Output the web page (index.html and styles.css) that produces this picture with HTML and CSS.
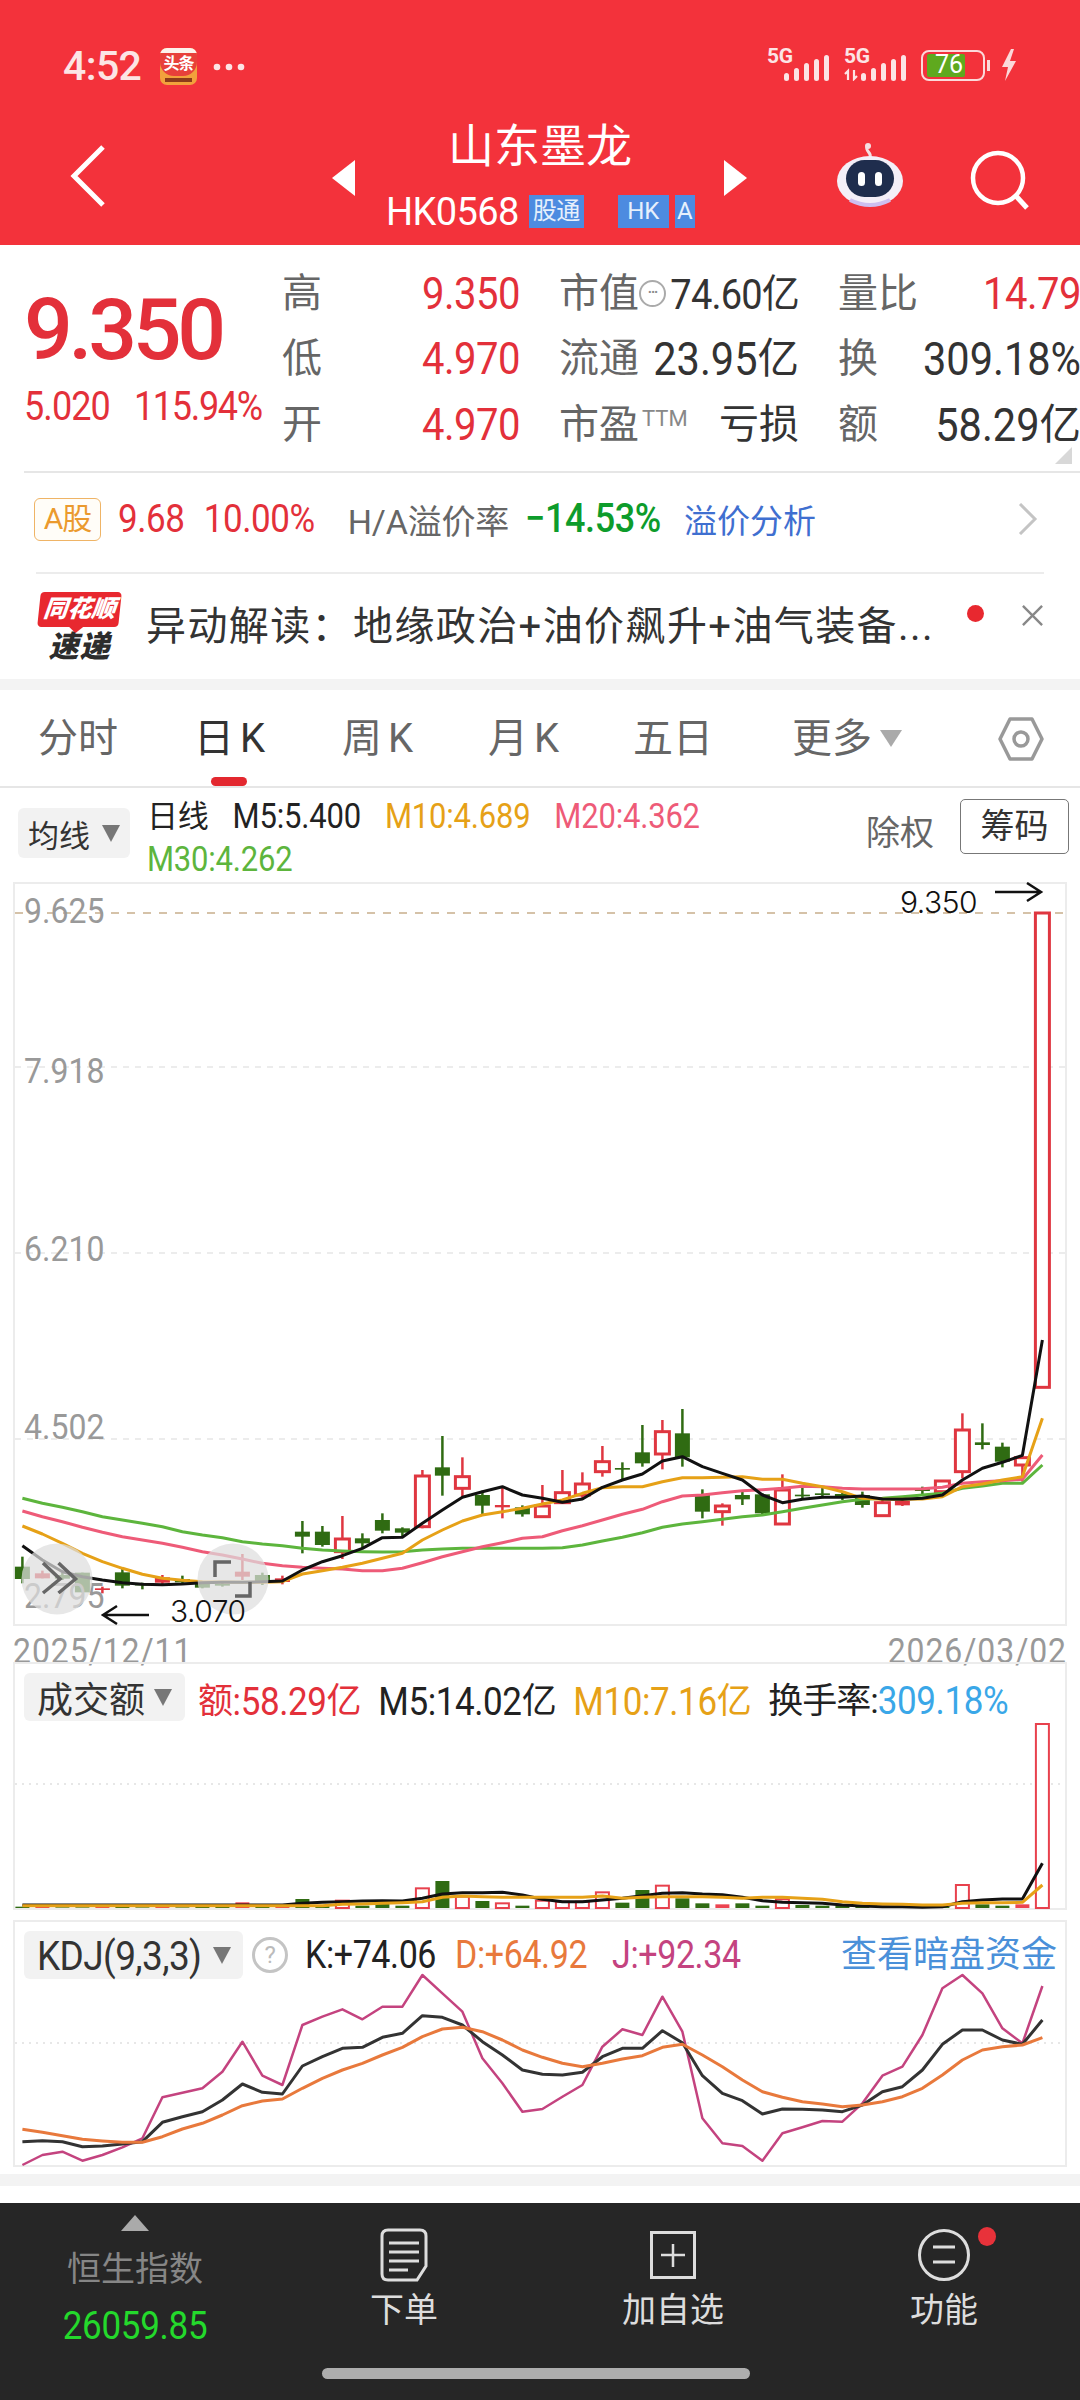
FILE: index.html
```html
<!DOCTYPE html>
<html lang="zh-CN">
<head>
<meta charset="utf-8">
<title>山东墨龙</title>
<link rel="stylesheet" href="styles.css">
</head>
<body>
<div class="page">
  <header class="top">
    <div class="status">
      <span class="time">4:52</span>
      <span class="app-icon"><span class="app-top"></span><span class="app-text">头条</span><span class="app-sub"></span></span>
      <svg class="more-dots" viewBox="0 0 32 8"><circle cx="4" cy="4" r="3.300"/><circle cx="16" cy="4" r="3.300"/><circle cx="28" cy="4" r="3.300"/></svg>
      <span class="status-right">
        <span class="sim"><span class="five-g">5G</span><svg class="bars" viewBox="0 0 45 26"><rect x="0" y="18" width="5" height="8" rx="2.500"/><rect x="10" y="13" width="5" height="13" rx="2.500"/><rect x="20" y="8" width="5" height="18" rx="2.500"/><rect x="30" y="4" width="5" height="22" rx="2.500"/><rect x="40" y="0" width="5" height="26" rx="2.500"/></svg></span>
        <span class="sim sim-two"><span class="five-g">5G</span><svg class="bars" viewBox="0 0 62 26"><path d="M4 25v-9l-3 3M10 15v9l3-3" fill="none" stroke="#fce4e5" stroke-width="2.200"/><rect x="17" y="18" width="5" height="8" rx="2.500"/><rect x="27" y="13" width="5" height="13" rx="2.500"/><rect x="37" y="8" width="5" height="18" rx="2.500"/><rect x="47" y="4" width="5" height="22" rx="2.500"/><rect x="57" y="0" width="5" height="26" rx="2.500"/></svg></span>
        <span class="battery"><span class="battery-fill"></span><span class="battery-num">76</span></span>
        <span class="battery-cap"></span>
        <svg class="bolt" viewBox="0 0 16 32"><path d="M10 0 1 18h6l-3 14 11-20H9l4-12z" fill="#fbd9da"/></svg>
      </span>
    </div>
    <nav class="nav">
      <svg class="back" viewBox="0 0 36 62"><path d="M33 2 4 31l29 29" fill="none" stroke="#fff" stroke-width="5"/></svg>
      <div class="switcher">
        <span class="tri tri-left"></span>
        <div class="stock">
          <div class="stock-name">山东墨龙</div>
          <div class="stock-code">
            <span class="code">HK0568</span>
            <span class="badge badge-tong"><span class="badge-clip">股通</span></span>
            <span class="badge badge-hk">HK</span>
            <span class="badge badge-a">A</span>
          </div>
        </div>
        <span class="tri tri-right"></span>
      </div>
      <svg class="robot" viewBox="0 0 70 66">
        <path d="M34 14c2-4-5-6-3-10" fill="none" stroke="#f4dfe2" stroke-width="3"/>
        <circle cx="32" cy="3" r="3" fill="#f4dfe2"/>
        <ellipse cx="34" cy="38" rx="33" ry="25" fill="#f4eff8"/>
        <path d="M14 57q20 10 40 0" fill="none" stroke="#cdbff0" stroke-width="4"/>
        <rect x="10" y="17" width="48" height="37" rx="18.500" fill="#1f2d4d"/>
        <rect x="22" y="29" width="7" height="14" rx="3.500" fill="#fff"/>
        <rect x="39" y="29" width="7" height="14" rx="3.500" fill="#fff"/>
      </svg>
      <svg class="search" viewBox="0 0 62 60"><circle cx="28" cy="28" r="25" fill="none" stroke="#fff" stroke-width="4.500"/><path d="M46 46l11 12" stroke="#fff" stroke-width="5"/></svg>
    </nav>
  </header>

  <section class="quote">
    <div class="price">
      <div class="price-now">9.350</div>
      <div class="price-change"><span class="tall">5.020</span><span class="tall pct">115.94%</span></div>
    </div>
    <div class="stats">
      <div class="stat"><span class="label">高</span><span class="up tall">9.350</span></div>
      <div class="stat"><span class="label">市值<span class="more-dot">···</span></span><span class="dark small-val tall">74.60<i class="yi">亿</i></span></div>
      <div class="stat"><span class="label">量比</span><span class="up tall">14.79</span></div>
      <div class="stat"><span class="label">低</span><span class="up tall">4.970</span></div>
      <div class="stat"><span class="label">流通</span><span class="dark wide tall">23.95<i class="yi">亿</i></span></div>
      <div class="stat"><span class="label">换</span><span class="dark wide tall">309.18%</span></div>
      <div class="stat"><span class="label">开</span><span class="up tall">4.970</span></div>
      <div class="stat"><span class="label">市盈<sup class="ttm">TTM</sup></span><span class="dark">亏损</span></div>
      <div class="stat"><span class="label">额</span><span class="dark wide tall">58.29<i class="yi">亿</i></span></div>
    </div>
    <span class="corner"></span>
  </section>

  <section class="arow">
    <span class="a-badge">A股</span>
    <span class="a-val a-price tall">9.68</span>
    <span class="a-val a-pct tall">10.00%</span>
    <span class="a-label">H/A溢价率</span>
    <span class="a-green tall">−14.53%</span>
    <span class="a-link">溢价分析</span>
    <svg class="a-chevron" viewBox="0 0 20 32"><path d="M2 1l15 15L2 31" fill="none" stroke="#c4c4c4" stroke-width="3"/></svg>
  </section>

  <section class="news">
    <div class="news-logo"><span class="logo-top"><span class="logo-name">同花顺</span></span><span class="logo-bottom">速递</span></div>
    <div class="news-text">异动解读：地缘政治+油价飙升+油气装备...</div>
    <span class="news-dot"></span>
    <svg class="news-close" viewBox="0 0 24 24"><path d="M2 2l20 20M22 2 2 22" stroke="#888" stroke-width="2.500"/></svg>
  </section>

  <div class="band"></div>

  <nav class="tabs">
    <span class="tab">分时</span>
    <span class="tab tab-on">日<b class="k">K</b></span>
    <span class="tab">周<b class="k">K</b></span>
    <span class="tab">月<b class="k">K</b></span>
    <span class="tab">五日</span>
    <span class="tab tab-more">更多<span class="down down-light"></span></span>
    <svg class="hex" viewBox="0 0 46 44"><path d="M12 2h22l10 20-10 20H12L2 22z" fill="none" stroke="#999" stroke-width="3.500" stroke-linejoin="round"/><circle cx="23" cy="22" r="7" fill="none" stroke="#999" stroke-width="3.500"/></svg>
  </nav>

  <section class="legend">
    <span class="chip chip-ma">均线<span class="down"></span></span>
    <div class="legend-values">
      <span class="ink">日线</span><span class="ink tall">M5:5.400</span><span class="c-orange tall">M10:4.689</span><span class="c-pink tall">M20:4.362</span>
      <span class="c-green tall">M30:4.262</span>
    </div>
    <span class="adjust">除权</span>
    <span class="chips-btn">筹码</span>
  </section>

  <section class="panel panel-k">
    <svg id="kline" class="plot" viewBox="13 882 1054 744"></svg>
    <span class="axis axis-1 tall">9.625</span>
    <span class="axis axis-2 tall">7.918</span>
    <span class="axis axis-3 tall">6.210</span>
    <span class="axis axis-4 tall">4.502</span>
    <span class="axis axis-5 tall">2.795</span>
    <svg class="plot" viewBox="13 882 1054 744">
      <circle cx="57" cy="1579" r="35.500" class="fab"/>
      <circle cx="233" cy="1579" r="35.500" class="fab"/>
      <path d="M43 1563l17 16-17 14M58.500 1563l17 16-17 14" class="fab-ico"/>
      <path d="M215 1577v-15h16M235 1596h15v-14" class="fab-ico"/>
      <path d="M149 1615h-46M117 1606l-14 9 14 9" class="mark"/>
      <path d="M995 892h46M1027 883l14 9-14 9" class="mark"/>
    </svg>
    <span class="mark-text mark-high">9.350</span>
    <span class="mark-text mark-low">3.070</span>
  </section>

  <div class="dates"><span class="tall">2025/12/11</span><span class="tall">2026/03/02</span></div>

  <section class="panel panel-vol">
    <svg id="vol" class="plot" viewBox="13 1662 1054 248"></svg>
    <div class="ind-head">
      <span class="chip chip-vol">成交额<span class="down"></span></span>
      <span class="c-red tall"><i class="yi">额</i>:58.29<i class="yi">亿</i></span>
      <span class="ink tall">M5:14.02<i class="yi">亿</i></span>
      <span class="c-orange tall">M10:7.16<i class="yi">亿</i></span>
      <span class="turn"><span class="ink">换手率:</span><span class="c-blue tall">309.18%</span></span>
    </div>
  </section>

  <section class="panel panel-kdj">
    <svg id="kdj" class="plot" viewBox="13 1920 1054 247"></svg>
    <div class="ind-head">
      <span class="chip chip-kdj"><span class="tall">KDJ(9,3,3)</span><span class="down"></span></span>
      <span class="help">?</span>
      <span class="ink kv kv-k tall">K:+74.06</span>
      <span class="c-dline kv tall">D:+64.92</span>
      <span class="c-jline kv kv-j tall">J:+92.34</span>
      <span class="dark-pool">查看暗盘资金</span>
    </div>
  </section>

  <div class="spacer-white"></div>
  <div class="band band-low"></div>
  <div class="spacer-bottom"></div>

  <footer class="bottom">
    <div class="index">
      <span class="index-arrow"></span>
      <span class="index-name">恒生指数</span>
      <span class="index-val tall">26059.85</span>
    </div>
    <div class="action">
      <svg class="action-ico ico-order" viewBox="0 0 48 54"><path d="M8 2h32q6 0 6 6v30l-9 14H8q-6 0-6-6V8q0-6 6-6z" fill="none" stroke="#ddd" stroke-width="3"/><path d="M9 15h30M9 24h30M9 33h30M9 42h19" stroke="#ddd" stroke-width="3"/></svg>
      <span>下单</span>
    </div>
    <div class="action">
      <svg class="action-ico ico-add" viewBox="0 0 46 48"><rect x="1.500" y="1.500" width="43" height="45" fill="none" stroke="#ddd" stroke-width="3"/><path d="M23 13v23M11 24h24" stroke="#ddd" stroke-width="2.500"/></svg>
      <span>加自选</span>
    </div>
    <div class="action">
      <svg class="action-ico ico-fn" viewBox="0 0 52 52"><circle cx="26" cy="26" r="24.500" fill="none" stroke="#ddd" stroke-width="3"/><path d="M15 18h22M15 33h22" stroke="#ddd" stroke-width="3"/></svg>
      <span>功能</span>
      <i class="fn-dot"></i>
    </div>
    <span class="home-pill"></span>
  </footer>
</div>
<script src="chart.js"></script>
</body>
</html>
```

FILE: styles.css
```css
* { box-sizing: border-box; }
html, body { margin: 0; padding: 0; background: #fff; }
body { font-family: Roboto, "Noto Sans CJK SC", sans-serif; }
.page { width: 1080px; height: 2400px; overflow: hidden; display: flex; flex-direction: column; position: relative; }
.tall { display: inline-block; transform: scaleY(1.12); }
.yi { display: inline-block; font-style: normal; transform: scaleY(.9); }

/* header */
.top { height: 245px; background: #f3323b; color: #fff; flex: none; }
.status { height: 125px; padding: 48px 63px 0 63px; display: flex; align-items: flex-start; }
.time { width: 97px; font-size: 41px; line-height: 36px; font-weight: 500; color: #fce4e5; letter-spacing: -.6px; }
.app-icon { width: 37px; height: 37px; border-radius: 7px; background: #f2a13c; position: relative; overflow: hidden; display: block; }
.app-top { position: absolute; left: 0; right: 0; top: 0; height: 28px; background: #e8403a; border-top: 5px solid #fdf3ec; border-radius: 0 0 14px 14px; }
.app-text { position: absolute; left: 0; top: 7px; font-size: 16px; line-height: 18px; color: #fff; width: 37px; text-align: center; font-weight: 700; letter-spacing: -1px; }
.app-sub { position: absolute; left: 5px; right: 5px; bottom: 3px; height: 4px; background: #8d3a1a; }
.more-dots { width: 32px; height: 8px; margin: 15px 0 0 16px; fill: #fce4e5; }
.status-right { margin-left: auto; display: flex; align-items: flex-start; }
.sim { position: relative; display: block; width: 62px; height: 33px; }
.sim-two { margin-left: 15px; }
.five-g { position: absolute; left: 0; top: -2px; font-size: 21px; line-height: 20px; font-weight: 700; color: #fce4e5; letter-spacing: -.4px; }
.bars { position: absolute; right: 0; bottom: 0; width: 45px; height: 26px; fill: #fce4e5; }
.sim-two .bars { width: 62px; }
.battery { margin-left: 15px; margin-top: 2px; width: 64px; height: 31px; border: 2.500px solid #fbd9da; border-radius: 8px; position: relative; display: block; }
.battery-fill { position: absolute; left: 4px; top: 2px; bottom: 2px; width: 38px; background: #5fa91e; border-radius: 2px; }
.battery-num { position: absolute; left: 12px; top: 0; font-size: 25px; line-height: 26px; color: #fff; }
.battery-cap { width: 3px; height: 11px; background: #fbd9da; margin: 12px 0 0 2px; display: block; }
.bolt { width: 16px; height: 32px; margin: 1px 0 0 11px; }

.nav { height: 120px; display: flex; align-items: flex-start; position: relative; }
.back { width: 36px; height: 62px; margin: 20px 0 0 70px; }
.switcher { position: absolute; left: 332px; top: 0; width: 415px; display: flex; justify-content: space-between; }
.tri { width: 0; height: 0; border-style: solid; border-width: 18px 0; margin-top: 35px; border-color: transparent; }
.tri-left { border-right: 23px solid #fff; }
.tri-right { border-left: 23px solid #fff; }
.stock { position: absolute; left: 54px; top: -4px; width: 310px; }
.stock-name { font-size: 46px; line-height: 50px; text-align: center; width: 308px; }
.stock-code { display: flex; align-items: center; margin-top: 24px; height: 33px; }
.code { font-size: 38px; line-height: 34px; color: #fff; letter-spacing: -.6px; }
.badge { background: #4d8be0; font-size: 24px; line-height: 32px; height: 33px; padding: 0; text-align: center; display: block; color: #e7f0fc; overflow: hidden; }
.badge-tong { width: 55px; margin-left: 10px; white-space: nowrap; }
.badge-clip { letter-spacing: -.5px; }
.badge-hk { width: 51px; margin-left: 34px; }
.badge-a { width: 20px; margin-left: 6px; }
.robot { position: absolute; left: 836px; top: 18px; width: 70px; height: 66px; }
.search { position: absolute; left: 970px; top: 25px; width: 62px; height: 60px; }

/* quote */
.quote { height: 228px; margin-left: 24px; border-bottom: 2px solid #e6e6e6; position: relative; flex: none; display: flex; }
.price { width: 259px; color: #e3303a; flex: none; }
.price-now { font-size: 86px; line-height: 64px; margin: 53px 0 0 0; font-weight: 500; letter-spacing: -4.300px; }
.price-change { font-size: 36px; line-height: 30px; margin-top: 30px; display: flex; gap: 24px; letter-spacing: -.9px; white-space: nowrap; }
.pct { letter-spacing: -1.300px; }
.stats { position: absolute; left: 258px; top: 0; display: grid; grid-template-columns: 238px 240px 243px; column-gap: 39px; grid-auto-rows: 65.500px; padding-top: 16px; white-space: nowrap; }
.stat { display: flex; justify-content: space-between; align-items: center; font-size: 40px; line-height: 44px; }
.label { color: #666; display: flex; align-items: center; }
.up { color: #e3303a; letter-spacing: -.5px; }
.dark { color: #333; letter-spacing: 0; }
.wide { font-size: 41.500px; }
.small-val { font-size: 38px; letter-spacing: -.8px; }
.more-dot { width: 27px; height: 27px; border: 2px solid #aaa; border-radius: 50%; font-size: 14px; line-height: 20px; color: #888; text-align: center; margin-left: 0; letter-spacing: -1px; font-weight: 700; }
.ttm { font-size: 22px; line-height: 22px; color: #888; margin: -12px 0 0 3px; }
.corner { position: absolute; right: 8px; bottom: 7px; width: 0; height: 0; border-style: solid; border-width: 0 0 17px 17px; border-color: transparent transparent #d8d8d8 transparent; }

/* A share */
.arow { height: 99px; display: flex; align-items: center; padding: 0 0 7px 34px; flex: none; white-space: nowrap; position: relative; font-size: 35px; }
.a-badge { width: 67px; height: 43px; border: 1.500px solid #efb466; border-radius: 6px; color: #eb9a2e; font-size: 30px; line-height: 40px; text-align: center; background: #fffdf8; letter-spacing: -1px; }
.a-val { color: #e3303a; letter-spacing: -.4px; }
.a-price { margin-left: 17px; }
.a-pct { margin-left: 19px; }
.a-label { color: #666; margin-left: 33px; font-size: 34px; letter-spacing: -.2px; }
.a-green { color: #0d9c2b; margin-left: 16px; font-size: 36px; font-weight: 500; letter-spacing: -.4px; }
.a-link { color: #3f6fd0; margin-left: 23px; font-size: 33px; }
.a-chevron { position: absolute; left: 1018px; top: 30px; width: 20px; height: 32px; }

/* news */
.news { height: 107px; margin: 0 36px; border-top: 2px solid #ececec; display: flex; align-items: flex-start; flex: none; position: relative; }
.news-logo { width: 81px; margin: 18px 0 0 3px; }
.logo-top { display: block; height: 35px; background: #e8282f; border-radius: 4px; transform: skewX(-6deg); position: relative; text-align: center; }
.logo-top::after { content: ""; position: absolute; left: 32px; bottom: -6px; width: 0; height: 0; border-style: solid; border-width: 6px 7px 0; border-color: #e8282f transparent transparent; }
.logo-name { color: #fff; font-size: 24px; line-height: 34px; font-weight: 900; font-style: italic; letter-spacing: 0; }
.logo-bottom { display: block; font-size: 30px; line-height: 30px; color: #2c2c2c; text-align: center; margin-top: 5px; letter-spacing: 1px; font-weight: 900; font-style: italic; }
.news-text { font-size: 40px; line-height: 48px; color: #333; margin: 29px 0 0 26px; white-space: nowrap; letter-spacing: 1.400px; }
.news-dot { position: absolute; left: 931px; top: 31px; width: 17px; height: 17px; border-radius: 50%; background: #e8282f; }
.news-close { position: absolute; left: 985px; top: 30px; width: 23px; height: 23px; }

.band { height: 11px; background: #f3f3f3; flex: none; }

/* tabs */
.tabs { height: 98px; border-bottom: 2px solid #e6e6e6; padding: 27px 0 0 38px; display: grid; grid-template-columns: 156px 148px 146px 145px 159px auto; align-content: start; position: relative; flex: none; }
.tab { font-size: 40px; line-height: 44px; color: #666; position: relative; white-space: nowrap; }
.k { font-weight: 400; margin-left: 6px; font-size: 40px; }
.tab-on { color: #333; }
.tab-on::after { content: ""; position: absolute; left: 17px; top: 60px; width: 36px; height: 9px; background: #e3282f; border-radius: 5px; }
.tab-more .down { margin-left: 8px; vertical-align: 5px; }
.hex { position: absolute; left: 998px; top: 27px; width: 46px; height: 44px; }
.down { display: inline-block; width: 0; height: 0; border-style: solid; border-width: 17px 9px 0; border-color: #777 transparent transparent; }
.down-light { border-width: 17px 11px 0; border-top-color: #aaa; }

/* legend */
.legend { height: 94px; display: flex; position: relative; flex: none; padding: 8px 0 0 18px; }
.chip { background: #f2f2f2; border-radius: 6px; height: 50px; color: #333; display: flex; align-items: center; white-space: nowrap; }
.chip-ma { width: 112px; margin-top: 12px; padding-left: 10px; font-size: 31px; flex: none; }
.chip-ma .down { margin-left: 12px; }
.legend-values { width: 590px; margin-left: 17px; font-size: 31px; line-height: 41px; display: flex; flex-wrap: wrap; white-space: nowrap; letter-spacing: -.2px; }
.legend-values span { margin-right: 24px; }
.ink { color: #222; }
.c-orange { color: #e6a117; }
.c-pink { color: #ee5b78; }
.c-green { color: #5db53d; }
.c-red { color: #e3303a; }
.c-blue { color: #3aa7e8; }
.c-dline { color: #e8793c; }
.c-jline { color: #c4437f; }
.adjust { position: absolute; left: 866px; top: 25px; font-size: 34px; line-height: 40px; color: #666; }
.chips-btn { position: absolute; left: 960px; top: 11px; width: 109px; height: 55px; border: 1.500px solid #777; border-radius: 5px; font-size: 34px; line-height: 52px; text-align: center; color: #333; }

/* chart panels */
.panel { margin: 0 13px; border: 2px solid #ececec; position: relative; flex: none; }
.panel-k { height: 744px; }
.panel-vol { height: 248px; }
.panel-kdj { height: 247px; margin-top: 10px; }
.plot { position: absolute; left: -2px; top: -2px; width: 1054px; }
.panel-k .plot { height: 744px; }
.panel-vol .plot { height: 248px; }
.panel-kdj .plot { height: 247px; }
.axis { position: absolute; left: 9px; font-size: 32px; line-height: 32px; color: #999; }
.axis-1 { top: 11px; }
.axis-2 { top: 171px; }
.axis-3 { top: 349px; }
.axis-4 { top: 527px; }
.axis-5 { top: 696px; }
.fab { fill: rgba(222,222,222,.72); }
.fab-ico { fill: none; stroke: #666; stroke-width: 3.500; }
.mark { fill: none; stroke: #111; stroke-width: 2.500; }
.mark-text { position: absolute; font-size: 30px; line-height: 30px; color: #111; font-family: Inter, Roboto, sans-serif; font-weight: 300; letter-spacing: -.5px; }
.mark-high { left: 885px; top: 3px; }
.mark-low { left: 155px; top: 712px; }
.dates { height: 36px; margin: 0 13px; display: flex; justify-content: space-between; font-size: 32px; line-height: 34px; color: #999; flex: none; letter-spacing: .9px; padding-top: 7px; }

.ind-head { position: absolute; left: 9px; top: 9px; display: flex; align-items: center; font-size: 35px; white-space: nowrap; height: 48px; letter-spacing: -.4px; }
.chip-vol { width: 161px; height: 48px; padding-left: 13px; font-size: 36px; letter-spacing: 0; }
.chip-vol .down { margin-left: 9px; }
.c-red { margin-left: 13px; }
.ind-head .ink { margin-left: 17px; }
.ind-head .c-orange { margin-left: 17px; }
.ind-head .turn .ink { margin-left: 17px; letter-spacing: -1px; }
.chip-kdj { width: 219px; height: 48px; padding-left: 13px; font-size: 37px; letter-spacing: -.6px; }
.chip-kdj .down { margin-left: 12px; }
.help { width: 36px; height: 36px; border: 3px solid #c4c4c4; border-radius: 50%; margin-left: 9px; font-size: 24px; line-height: 30px; color: #bbb; text-align: center; }
.ind-head .kv { margin-left: 19px; font-size: 34px; }
.ind-head .kv-k { margin-left: 17px; }
.ind-head .kv-j { margin-left: 25px; }
.dark-pool { position: absolute; left: 817px; top: 4px; font-size: 36px; line-height: 40px; color: #4a90d9; letter-spacing: 0; }

.spacer-white { height: 7px; flex: none; }
.band-low { height: 12px; }
.spacer-bottom { height: 17px; flex: none; }

/* bottom bar */
.bottom { height: 197px; background: #262626; position: relative; flex: none; display: grid; grid-template-columns: 270px 268px 270px 272px; }
.index { display: flex; flex-direction: column; align-items: center; padding-top: 12px; }
.index-arrow { width: 0; height: 0; border-style: solid; border-width: 0 14px 16px; border-color: transparent transparent #aaa; }
.index-name { font-size: 34px; line-height: 40px; color: #868686; margin-top: 18px; }
.index-val { font-size: 35px; line-height: 40px; color: #24d92c; margin-top: 18px; letter-spacing: -.3px; }
.action { color: #ddd; font-size: 34px; line-height: 40px; display: flex; flex-direction: column; align-items: center; position: relative; }
.action-ico { display: block; }
.ico-order { width: 48px; height: 54px; margin: 25px 0 8px; }
.ico-add { width: 46px; height: 48px; margin: 28px 0 11px; }
.ico-fn { width: 52px; height: 52px; margin: 26px 0 9px; }
.fn-dot { position: absolute; left: 170px; top: 24px; width: 18px; height: 19px; border-radius: 50%; background: #e8323a; }
.home-pill { position: absolute; left: 322px; top: 165px; width: 428px; height: 11px; border-radius: 6px; background: #adadad; }
```

FILE: chart.js
```js
(function () {
  var NS = 'http://www.w3.org/2000/svg';
  var STEP = 20, X0 = 22.4;
  function xAt(i) { return X0 + STEP * i; }
  function add(svg, tag, attrs) {
    var el = document.createElementNS(NS, tag);
    for (var k in attrs) el.setAttribute(k, attrs[k]);
    svg.appendChild(el);
    return el;
  }
  function line(svg, values, base, color, width) {
    var d = values.map(function (v, i) {
      return (i ? 'L' : 'M') + xAt(i).toFixed(1) + ' ' + (base + v / 3).toFixed(1);
    }).join('');
    add(svg, 'path', { d: d, fill: 'none', stroke: color, 'stroke-width': width, 'stroke-linejoin': 'round' });
  }
  function grid(svg, y, color, dash, x1, x2) {
    add(svg, 'path', { d: 'M' + x1 + ' ' + y + 'H' + x2, stroke: color, 'stroke-width': 1.5, 'stroke-dasharray': dash, fill: 'none' });
  }

  /* K-line: [type, high, top, bottom, low]; values are y offsets x3 from 1380 */
  var RED = '#df3640', GREEN = '#2f6b12';
  var candles = [
    ['g',530,560,597,610],['R',572,580,595,595],['g',578,585,596,600],['g',578,578,637,637],['R',620,625,630,640],
    ['g',565,577,617,625],['g',608,612,616,628],['R',585,592,608,612],['g',587,597,607,610],['g',610,612,623,625],
    ['g',608,612,617,620],['R',522,575,590,600],['g',578,585,605,615],['R',587,595,606,613],['g',423,455,470,520],
    ['g',438,455,495,500],['r',408,477,515,537],['g',460,475,490,505],['g',400,420,452,460],['g',442,445,458,470],
    ['r',270,288,440,445],['g',168,262,287,347],['r',232,290,325,350],['g',332,345,377,402],['R',322,375,382,415],
    ['g',376,382,403,410],['r',315,378,410,410],['r',270,338,368,368],['r',277,312,345,360],['r',198,245,275,290],
    ['g',247,264,269,300],['g',135,217,250,260],['r',120,155,222,268],['g',87,160,232,260],['g',328,342,395,415],
    ['r',370,378,395,437],['g',330,345,358,375],['g',340,343,400,405],['r',283,330,432,432],['g',322,344,349,355],
    ['g',323,340,345,355],['g',335,342,354,360],['g',335,345,375,383],['r',360,368,407,408],['R',360,363,376,378],
    ['g',320,326,333,342],['r',300,303,335,340],['r',100,150,275,295],['g',130,187,195,208],['g',188,200,245,262],
    ['r',232,233,255,305],['r',-1401,-1401,22,22]
  ];
  var m5 = [497,540,575,590,600,608,613,614,612,608,607,607,605,603,570,545,527,505,473,472,430,390,352,335,320,345,355,367,357,322,300,282,243,230,260,280,300,345,368,358,352,352,348,357,358,355,345,300,265,247,226,-120];
  var m10 = [438,462,490,520,545,565,583,595,601,605,606,607,607,605,582,572,562,550,535,520,480,450,423,405,395,385,372,360,340,323,320,320,305,293,293,292,290,298,298,310,320,335,355,358,358,357,350,320,312,300,290,115];
  var m20 = [393,410,425,442,457,470,480,490,502,515,525,537,550,557,562,565,567,572,572,565,548,530,515,500,488,475,470,452,437,420,403,388,365,348,345,338,332,329,325,319,320,325,327,327,327,326,322,310,305,302,298,225];
  var m30 = [355,370,382,395,410,420,430,440,455,465,473,485,492,497,505,510,513,515,516,515,510,507,505,505,505,505,505,503,495,483,472,458,442,432,425,418,410,405,395,385,375,365,358,355,350,345,340,325,318,310,310,255];

  var k = document.getElementById('kline');
  grid(k, 913, '#c8ae8c', '8 8', 15, 1065);
  grid(k, 1067, '#e6e6e6', '6 6', 15, 1065);
  grid(k, 1253, '#e6e6e6', '6 6', 15, 1065);
  grid(k, 1439, '#e6e6e6', '6 6', 15, 1065);
  candles.forEach(function (c, i) {
    var x = xAt(i), Y = function (v) { return 1380 + v / 3; };
    var color = c[0] === 'g' ? GREEN : RED;
    add(k, 'path', { d: 'M' + x + ' ' + Y(c[1]) + 'V' + Y(c[4]), stroke: color, 'stroke-width': 2.5 });
    var hollow = c[0] === 'r';
    add(k, 'rect', {
      x: x - (hollow ? 7 : 7.5), y: Y(c[2]), width: hollow ? 14 : 15, height: Math.max(Y(c[3]) - Y(c[2]), 1.5),
      fill: hollow ? '#fff' : color, stroke: hollow ? color : 'none', 'stroke-width': hollow ? 3 : 0
    });
  });
  line(k, m30, 1380, '#5db53d', 3);
  line(k, m20, 1380, '#ee5b78', 3);
  line(k, m10, 1380, '#e6a117', 3);
  line(k, m5, 1380, '#111', 3);

  /* Volume */
  var v = document.getElementById('vol');
  var bars = [
    ['g',800],['R',800],['g',802],['g',802],['R',800],['g',800],['g',802],['R',800],['g',802],['g',800],
    ['g',797],['R',787],['g',800],['R',797],['g',777],['g',795],['r',782],['g',797],['g',790],['g',797],
    ['r',745],['g',723],['r',770],['g',783],['r',790],['g',797],['r',782],['r',785],['r',785],['r',757],
    ['g',788],['g',750],['r',737],['g',775],['g',790],['R',793],['g',790],['g',797],['r',778],['g',795],
    ['g',797],['g',797],['g',800],['R',797],['R',797],['g',800],['g',800],['r',735],['g',793],['g',797],
    ['R',793],['r',252]
  ];
  var vm5 = [795,795,795,795,795,795,795,795,795,795,795,795,795,795,790,787,785,783,782,783,775,762,758,758,757,765,778,785,785,780,775,767,760,758,762,764,772,782,787,788,790,795,798,800,800,802,800,785,780,777,777,670];
  var vm10 = [797,797,797,797,797,797,797,797,797,797,797,797,797,797,797,797,793,792,790,788,785,772,768,770,772,772,772,772,772,768,775,772,770,770,770,772,775,772,772,775,778,785,790,792,793,795,795,790,788,788,787,735];
  grid(v, 1784, '#dfdfdf', '2 5', 15, 1065);
  bars.forEach(function (b, i) {
    var x = xAt(i), top = 1640 + b[1] / 3, bottom = 1908;
    if (b[0] === 'r') {
      add(v, 'rect', { x: x - 6.5, y: top, width: 13, height: bottom - top, fill: '#fff', stroke: '#e8414d', 'stroke-width': 2 });
    } else {
      add(v, 'rect', { x: x - 7, y: top, width: 14, height: bottom - top, fill: b[0] === 'g' ? GREEN : '#ec4450' });
    }
  });
  line(v, vm5, 1640, '#111', 3);
  line(v, vm10, 1640, '#e6a117', 3);

  /* KDJ */
  var j = [765,735,725,752,735,712,685,562,548,535,485,395,497,525,345,320,298,328,290,290,195,250,305,445,520,605,597,560,525,410,358,375,260,365,625,700,708,752,670,652,633,635,580,497,470,375,235,195,250,355,400,228];
  var kk = [695,692,695,710,708,702,695,637,620,605,570,522,547,552,468,440,415,412,382,370,317,322,345,395,435,480,493,495,487,440,415,415,362,398,497,550,572,612,597,598,600,605,585,545,530,480,403,360,360,390,403,330];
  var d = [658,667,677,688,693,697,697,680,657,640,615,587,573,567,535,505,480,460,435,412,380,357,352,365,390,420,442,460,470,460,447,437,412,403,435,470,510,545,562,575,582,590,585,575,560,535,495,450,420,410,405,383];
  var q = document.getElementById('kdj');
  grid(q, 2043, '#dfdfdf', '2 5', 15, 1065);
  line(q, j, 1910, '#c4437f', 2.5);
  line(q, kk, 1910, '#333', 3);
  line(q, d, 1910, '#e8793c', 3);
})();
```
